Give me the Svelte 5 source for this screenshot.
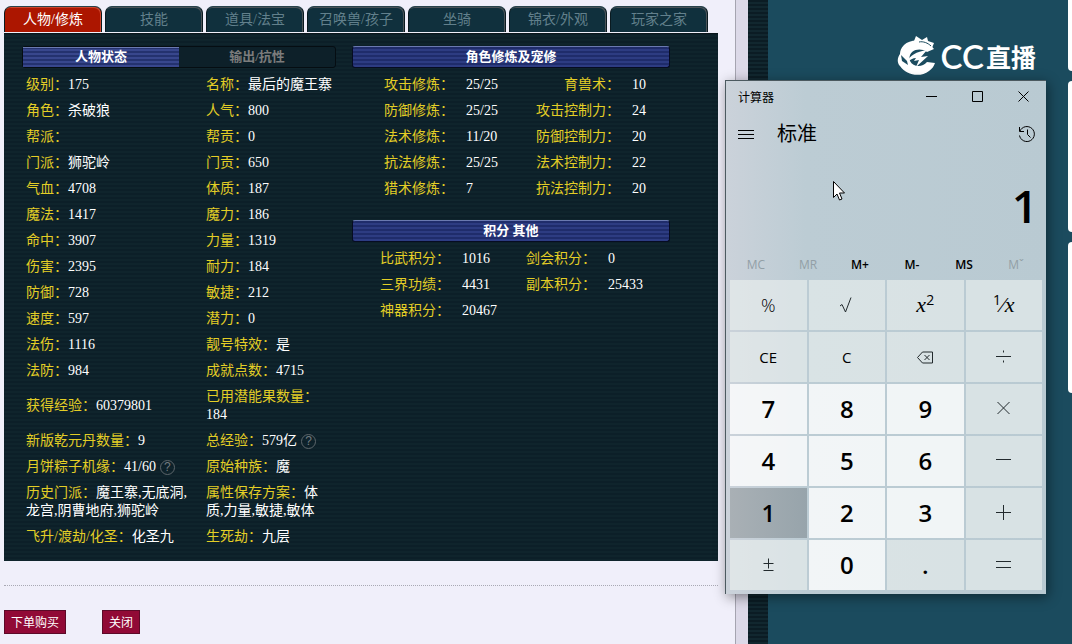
<script lang="ts">
	type Stat = { label: string; value: string; help?: boolean };

	const tabs = ['人物/修炼', '技能', '道具/法宝', '召唤兽/孩子', '坐骑', '锦衣/外观', '玩家之家'];
	let activeTab = $state(0);

	const status: [Stat, Stat][] = [
		[{ label: '级别', value: '175' }, { label: '名称', value: '最后的魔王寨' }],
		[{ label: '角色', value: '杀破狼' }, { label: '人气', value: '800' }],
		[{ label: '帮派', value: '' }, { label: '帮贡', value: '0' }],
		[{ label: '门派', value: '狮驼岭' }, { label: '门贡', value: '650' }],
		[{ label: '气血', value: '4708' }, { label: '体质', value: '187' }],
		[{ label: '魔法', value: '1417' }, { label: '魔力', value: '186' }],
		[{ label: '命中', value: '3907' }, { label: '力量', value: '1319' }],
		[{ label: '伤害', value: '2395' }, { label: '耐力', value: '184' }],
		[{ label: '防御', value: '728' }, { label: '敏捷', value: '212' }],
		[{ label: '速度', value: '597' }, { label: '潜力', value: '0' }],
		[{ label: '法伤', value: '1116' }, { label: '靓号特效', value: '是' }],
		[{ label: '法防', value: '984' }, { label: '成就点数', value: '4715' }],
		[{ label: '获得经验', value: '60379801' }, { label: '已用潜能果数量', value: '184' }],
		[{ label: '新版乾元丹数量', value: '9' }, { label: '总经验', value: '579亿', help: true }],
		[{ label: '月饼粽子机缘', value: '41/60', help: true }, { label: '原始种族', value: '魔' }],
		[
			{ label: '历史门派', value: '魔王寨,无底洞,龙宫,阴曹地府,狮驼岭' },
			{ label: '属性保存方案', value: '体质,力量,敏捷,敏体' }
		],
		[{ label: '飞升/渡劫/化圣', value: '化圣九' }, { label: '生死劫', value: '九层' }]
	];

	const training = [
		['攻击修炼', '25/25', '育兽术', '10'],
		['防御修炼', '25/25', '攻击控制力', '24'],
		['法术修炼', '11/20', '防御控制力', '20'],
		['抗法修炼', '25/25', '法术控制力', '22'],
		['猎术修炼', '7', '抗法控制力', '20']
	];

	const points = [
		['比武积分', '1016', '剑会积分', '0'],
		['三界功绩', '4431', '副本积分', '25433'],
		['神器积分', '20467', '', '']
	];

	const keys = [
		'%', 'sqrt', 'sqr', 'inv',
		'CE', 'C', 'back', 'div',
		'7', '8', '9', 'mul',
		'4', '5', '6', 'sub',
		'1', '2', '3', 'add',
		'neg', '0', '.', 'eq'
	];

	const shapes: Record<string, string> = {
		sqrt: 'M5 11l2-1.500 3.500 7.500L16 2.500',
		back: 'M3.500 10.500l5-5.500h10v11h-10zM10.500 8l5 5M15.500 8l-5 5',
		div: 'M4 9.500h15M11.500 3.500v2M11.500 13.500v2',
		mul: 'M5.500 3l12 12M17.500 3l-12 12',
		sub: 'M4 8.500h15',
		add: 'M4 9.500h15M11.500 2v15',
		neg: 'M6.500 8.500h10M11.500 3.500v10M6.500 15.500h10',
		eq: 'M4 6.500h15M4 12.500h15'
	};

	const isDigit = (key: string) => /^\d$/.test(key);

	let display = $state('1');
	let pressed = $state('1');

	const press = (key: string) => {
		pressed = key;
		if (isDigit(key)) display = key;
	};
</script>

{#snippet stat(item: Stat)}
	<span class="label">{item.label}：</span>{item.value}{#if item.help}<button class="help">?</button>{/if}
{/snippet}

<div class="desktop">
	<main>
		<nav>
			{#each tabs as tab, i}
				<button class="tab" class:active={i === activeTab} onclick={() => (activeTab = i)}>{tab}</button>
			{/each}
		</nav>

		<div class="panel">
			<section class="left">
				<div class="bar split">
					<button class="half on">人物状态</button>
					<button class="half">输出/抗性</button>
				</div>
				<table class="status">
					<tbody>
						{#each status as [a, b]}
							<tr>
								<td>{@render stat(a)}</td>
								<td>{@render stat(b)}</td>
							</tr>
						{/each}
					</tbody>
				</table>
			</section>

			<section class="right">
				<h2 class="bar">角色修炼及宠修</h2>
				<table class="pairs training">
					<tbody>
						{#each training as [l1, v1, l2, v2]}
							<tr>
								<th>{l1}：</th>
								<td>{v1}</td>
								<th>{l2}：</th>
								<td>{v2}</td>
							</tr>
						{/each}
					</tbody>
				</table>

				<h2 class="bar">积分 其他</h2>
				<table class="pairs points">
					<tbody>
						{#each points as [l1, v1, l2, v2]}
							<tr>
								<th>{l1}：</th>
								<td>{v1}</td>
								<th>{l2 ? l2 + '：' : ''}</th>
								<td>{v2}</td>
							</tr>
						{/each}
					</tbody>
				</table>
			</section>
		</div>

		<footer>
			<button>下单购买</button>
			<button>关闭</button>
		</footer>
	</main>

	<div class="edge"></div>
	<div class="stripe"></div>

	<aside>
		<div class="logo">
			<svg width="42" height="42" viewBox="0 0 42 42">
				<path d="M18 6l2-5 6 4 5-3 1 4 6 2-2 5-9-3z" fill="#fff" />
				<path
					d="M38 14C31 4 15 3 8 10c-3 3-4 6-4 9-3 4-3 9 0 12 6 9 20 12 29 5 3-2 5-5 6-8l-8-1c-5 6-14 5-17-1-3-9 8-15 17-9z"
					fill="#fff"
				/>
				<path d="M23 7c4-1 9 1 12 4" fill="none" stroke="#1b4b5e" />
				<path d="M11 27c3-7 9-10 20-12l-6 7 7-1-12 11 3-7-5 1 2-3c-3 0-6 2-9 4z" fill="#fff" />
				<path d="M5 20l6 6 1 4-6-4z" fill="#1b4b5e" />
			</svg>
			<span class="cc">CC</span><span class="live">直播</span>
		</div>
	</aside>

	<div class="rail">
		<div class="card first"></div>
		<div class="card"></div>
		<div class="card"></div>
	</div>

	<div class="calc">
		<header>
			<span class="title">计算器</span>
			<button><svg width="11" height="11"><path d="M0 5.500h11" /></svg></button>
			<button><svg width="11" height="11"><path d="M.5.5h10v10H.5z" /></svg></button>
			<button><svg width="11" height="11"><path d="M.5.5l10 10M10.500.5l-10 10" /></svg></button>
		</header>
		<div class="mode">
			<button><svg width="16" height="11"><path d="M0 1.500h16M0 5.500h16M0 9.500h16" /></svg></button>
			<span>标准</span>
			<button>
				<svg width="18" height="18" viewBox="0 0 18 18">
					<path d="M1.500 2v4.500H6M2 6a7.500 7.500 0 1 1-.5 4.500M9.500 4.500v5l3 3" />
				</svg>
			</button>
		</div>
		<output>{display}</output>
		<div class="memory">
			<button disabled>MC</button>
			<button disabled>MR</button>
			<button>M+</button>
			<button>M-</button>
			<button>MS</button>
			<button disabled>Mˇ</button>
		</div>
		<div class="keys">
			{#each keys as key}
				<button
					class:digit={isDigit(key)}
					class:pressed={key === pressed}
					class:dot={key === '.'}
					onclick={() => press(key)}
				>
					{#if shapes[key]}
						<svg width="23" height="21" viewBox="0 0 23 21"><path d={shapes[key]} /></svg>
					{:else if key === 'sqr'}
						<span class="math"><i>x</i><sup>2</sup></span>
					{:else if key === 'inv'}
						<span class="math"><sup>1</sup>⁄<i>x</i></span>
					{:else if key === '%'}
						<span class="percent">%</span>
					{:else}
						{key}
					{/if}
				</button>
			{/each}
		</div>
		<svg class="cursor" width="13" height="20" viewBox="0 0 13 20">
			<path d="M.5.5v16l3.500-3.500 2.500 6 2.500-1-2.500-6h5z" />
		</svg>
	</div>
</div>

<style>
	:global(body) {
		margin: 0;
		background: #1b4b5e;
	}

	button {
		padding: 0;
		border: 0;
		background: none;
		color: inherit;
		font: inherit;
	}

	.desktop {
		position: relative;
		display: grid;
		grid-template-columns: minmax(0, 1fr) 13px 20px 300px 4px;
		min-height: 100vh;
		overflow: hidden;
		font: 14px/18px 'Liberation Serif', 'Noto Sans CJK SC', serif;
	}

	main {
		padding: 6px 17px 10px 4px;
		background: #f0effa;
	}

	nav {
		display: flex;
		gap: 3px;
		height: 26px;
	}

	.tab {
		box-sizing: border-box;
		width: 98px;
		border: 1px solid #0a1a20;
		border-top-color: #28434c;
		border-bottom: 0;
		border-radius: 7px 7px 0 0;
		background: #10303d;
		box-shadow: inset -1px 1px #4b5358;
		color: #62808c;
	}

	.tab.active {
		background: #ac1600;
		box-shadow: inset -1px 1px #d0452c;
		color: #fff;
	}

	.panel {
		display: flex;
		gap: 16px;
		margin-top: 1px;
		padding: 13px 48px 11px 18px;
		background: repeating-linear-gradient(#0c1f28 0 2px, #0f242c 2px 4px);
		box-shadow: inset 0 1px #0a161b;
		color: #fff;
	}

	.left {
		width: 314px;
	}

	.right {
		flex: 1;
	}

	.bar {
		box-sizing: border-box;
		height: 22px;
		margin: 0 0 4px;
		border: 1px solid #060c22;
		border-top-color: #6a79b0;
		border-radius: 3px;
		background: repeating-linear-gradient(#1f2c6b 0 2px, #2d3c82 2px 4px);
		font: bold 13px/20px 'Liberation Serif', 'Noto Sans CJK SC', serif;
		text-align: center;
	}

	.split {
		display: flex;
		border-color: #050d12;
		background: #0d2029;
	}

	.half {
		flex: 1;
		color: #7c7c7c;
	}

	.half.on {
		background: repeating-linear-gradient(#24326f 0 2px, #38478d 2px 4px);
		box-shadow: inset 0 1px #6a79b0;
		color: #fff;
	}

	table {
		width: 100%;
		border-collapse: collapse;
		table-layout: fixed;
	}

	td,
	th {
		padding: 4px 0;
		font-weight: normal;
	}

	.label,
	th {
		color: #e3ce26;
	}

	.status td {
		padding: 4px 2px 4px 4px;
	}

	.status td:first-child {
		width: 170px;
		padding-right: 6px;
	}

	.help {
		width: 15px;
		height: 15px;
		margin: 0 0 0 4px;
		border: 1px solid #5d666b;
		border-radius: 50%;
		color: #737c80;
		font: 12px/13px 'Liberation Sans', sans-serif;
		vertical-align: top;
		margin-top: 2px;
	}

	.pairs th {
		width: 102px;
		text-align: right;
	}

	.pairs td {
		width: 52px;
		padding-left: 12px;
	}

	.training {
		margin-bottom: 18px;
	}

	.points th {
		width: 98px;
	}

	.points td {
		width: 36px;
	}

	.pairs td:last-child {
		width: auto;
	}

	footer {
		display: flex;
		gap: 36px;
		margin-top: 24px;
		padding-top: 24px;
		border-top: 1px dotted #a9a9b4;
	}

	footer button {
		height: 24px;
		padding: 0 6px;
		border: 1px solid #5c0a28;
		background: #910a36;
		color: #fff;
		font: 12px/20px 'Noto Sans CJK SC', sans-serif;
	}

	.edge {
		border-left: 1px solid #a5a4b0;
		background: #dcd9e8;
	}

	.stripe {
		background: repeating-linear-gradient(#0b1c24 0 2px, #11272f 2px 4px);
	}

	.logo {
		display: flex;
		align-items: center;
		justify-content: flex-end;
		padding: 34px 32px 0 0;
		color: #fff;
	}

	.cc {
		margin: 0 2px 0 3px;
		font: 600 33px/44px Lato, sans-serif;
	}

	.live {
		font: bold 25px/40px 'Noto Sans CJK SC', sans-serif;
	}

	.rail {
		display: flex;
		flex-direction: column;
		gap: 10px;
	}

	.card {
		height: 151px;
		border-radius: 4px 0 0 4px;
		background: #fff;
	}

	.card.first {
		height: 71px;
		border-top-left-radius: 0;
	}

	.calc {
		position: absolute;
		top: 80px;
		right: 26px;
		box-sizing: border-box;
		width: 321px;
		padding: 0 4px 4px;
		border: 1px solid #4c5a60;
		border-right: 0;
		border-bottom: 0;
		background: linear-gradient(90deg, #cbd2da, #bcccd4 25%, #b9cad2);
		box-shadow: 2px 3px 12px rgba(0, 0, 0, 0.45);
		color: #000;
		font: 12px/16px 'Open Sans', 'Noto Sans CJK SC', sans-serif;
	}

	.calc svg {
		fill: none;
		stroke: #000;
	}

	.calc header {
		display: flex;
		height: 34px;
		margin-right: -4px;
	}

	.title {
		flex: 1;
		padding-left: 8px;
		line-height: 34px;
	}

	.calc header button {
		width: 46px;
	}

	.mode {
		display: flex;
		align-items: center;
		height: 38px;
		padding: 0 6px 0 8px;
	}

	.mode button {
		display: flex;
	}

	.mode span {
		flex: 1;
		padding-left: 23px;
		font-size: 20px;
		line-height: 28px;
	}

	output {
		display: block;
		height: 96px;
		padding-right: 4px;
		font-size: 46px;
		font-weight: 600;
		line-height: 104px;
		text-align: right;
	}

	.memory {
		display: grid;
		grid-template-columns: repeat(6, 1fr);
		height: 31px;
		font-weight: 600;
	}

	.memory button:disabled {
		color: #929fa6;
		font-weight: normal;
	}

	.keys {
		display: grid;
		grid-template-columns: repeat(4, 1fr);
		grid-auto-rows: 50px;
		gap: 2px;
	}

	.keys button {
		display: flex;
		align-items: center;
		justify-content: center;
		background: rgba(236, 242, 240, 0.6);
		font-size: 15px;
		line-height: 24px;
	}

	.keys svg {
		stroke: #222a2d;
	}

	.keys .digit,
	.keys .dot {
		font-size: 24px;
		font-weight: 600;
	}

	.keys .digit {
		background: rgba(255, 255, 255, 0.8);
	}

	.keys .pressed {
		background: linear-gradient(90deg, #a9b0b5, #97a4ab);
	}

	.percent {
		font-size: 18px;
		font-weight: 300;
	}

	.math {
		font: 22px/24px 'Liberation Serif', serif;
	}

	.math sup {
		font: 14px/14px 'Open Sans', sans-serif;
		vertical-align: 7px;
	}

	.calc .cursor {
		position: absolute;
		top: 100px;
		left: 107px;
		fill: #fff;
	}
</style>
